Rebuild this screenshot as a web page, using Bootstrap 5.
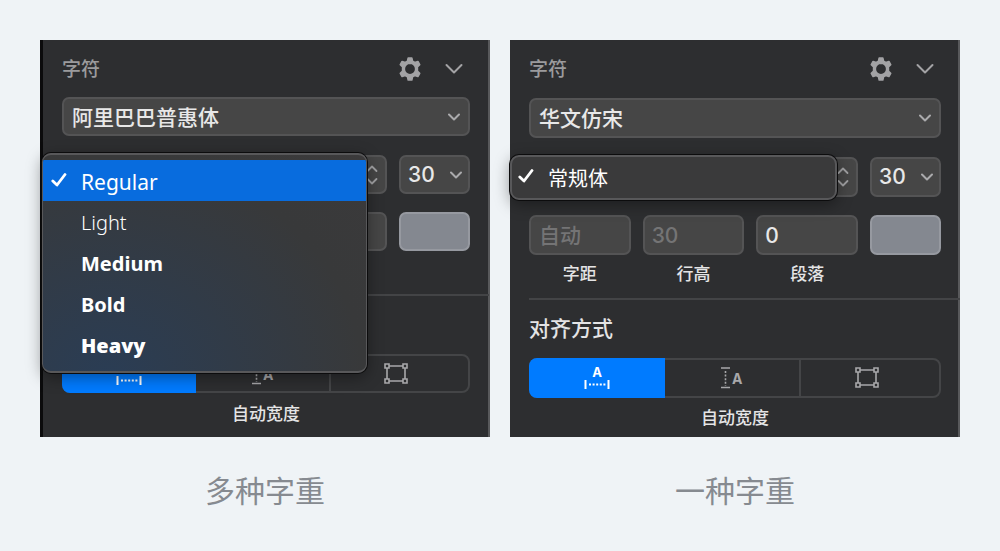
<!DOCTYPE html>
<html lang="zh-CN">
<head>
<meta charset="utf-8">
<meta name="viewport" content="width=device-width, initial-scale=1">
<title>字重对比</title>
<link href="https://cdn.jsdelivr.net/npm/bootstrap@5.3.0/dist/css/bootstrap.min.css" rel="stylesheet">
<style>
  body { background: #eff3f6; font-family: "Noto Sans CJK SC", sans-serif; }
  .compare { padding: 40px; gap: 20px; }
  .sample { flex: 1 1 0; min-width: 0; }
  .sample figcaption { margin-top: 34px; font-size: 30px; line-height: 36px; font-weight: 400; color: #868a90; }

  .inspector { --ctl: 40px; --pad-start: 19px; --pad-end: 17px; background: #2d2e30; color: #e4e4e5;
    border-right: 2px solid #58595b; padding: 0 var(--pad-end) 0 var(--pad-start); }
  .inspector.edge { --ctl: 39px; --pad-end: 18px; border-left: 3px solid #0b0b0c; }
  .inspector-head { height: 58px; }
  .edge .inspector-head { height: 57px; }
  .inspector-head h2 { font-size: 19px; line-height: 24px; font-weight: 500; color: #9b9b9d; padding-bottom: 2px; }
  .tool { border: 0; background: none; padding: 0; line-height: 0; color: #a3a3a5; }
  .tool-arrow { width: 32px; }

  .field { height: var(--ctl); width: 100%; border: 2px solid #545455; border-radius: 7px; background-color: #464646;
    color: #e8e8e8; font-size: 21px; line-height: 24px; padding: 0 8px 2px; font-weight: 500; }
  .field:focus { box-shadow: none; background-color: #464646; color: #e8e8e8; border-color: #6a6a6b; }
  .field.form-select { background-image: url("data:image/svg+xml,%3Csvg xmlns='http://www.w3.org/2000/svg' viewBox='0 0 12 8'%3E%3Cpath d='M1 1.5l5 5 5-5' fill='none' stroke='%23aaaaac' stroke-width='2' stroke-linecap='round' stroke-linejoin='round'/%3E%3C/svg%3E");
    background-size: 12px 8px; background-position: right 8px center; background-repeat: no-repeat; padding-right: 24px; }
  .field.num { font-family: Inter, sans-serif; font-size: 21px; padding-left: 7px; padding-bottom: 0; }
  .field.dim { color: #747475; }
  .field::placeholder { color: #747475; opacity: 1; }
  .field.form-select.num { background-position: right 6px center; }
  .swatch { background: #848890; border-color: #9699a0; }

  .grid-fields { display: grid; grid-template-columns: repeat(3, minmax(0, 1fr)) 71px; column-gap: 12px; }
  .grid-style { margin-top: 19px; }
  .grid-metrics { margin-top: 18px; }
  .span-three { grid-column: span 3; }
  .style-trigger { color: #a0a0a2; padding: 0 7px; }
  .caption-line { font-size: 17px; line-height: 24px; font-weight: 500; }
  .grid-metrics label, .grid-metrics .blank-label { height: 24px; margin-top: 6px; text-align: center; }

  .popup.dropdown-menu { top: -2px; left: calc(0px - var(--pad-start)); right: 21px; min-width: 0; margin: 0; padding: 0; z-index: 2;
    background: #3a3a3b; border: 2px solid #58585a; border-radius: 9px; overflow: hidden;
    box-shadow: 0 0 0 1px #0c0c0d, 0 4px 16px rgba(0,0,0,.4); }
  .popup.tall { left: -20px; right: 20px; padding: 5px 0 6px; border-width: 2px 1px 2px;
    background: radial-gradient(ellipse at 20% 105%, #2a3d55 0%, #38393a 70%, #3b3a3b 100%); }
  .popup .dropdown-item { height: 41px; padding: 2px 8px 0; display: flex; align-items: center; color: #fff; font-size: 21px; line-height: 28px;
    font-family: "Noto Sans", "Noto Sans CJK SC", sans-serif; }
  .popup .dropdown-item:hover { background: #4a4a4c; }
  .popup .dropdown-item.chosen { background: #086cde; }
  .popup .tick { width: 30px; line-height: 0; padding-bottom: 4px; }
  .popup .dropdown-item.face-cn { padding: 0 6px; font-size: 20px; font-family: "Noto Sans CJK SC", sans-serif; }
  .popup .dropdown-item.w-light { font-weight: 300; font-size: 20px; }
  .popup .dropdown-item.w-medium, .popup .dropdown-item.w-bold { font-weight: 700; font-size: 20px; }
  .popup .dropdown-item.w-heavy { font-weight: 900; font-size: 20px; }

  .rule { height: 2px; margin: 13px -19px 0 0; background: #434446; }
  .section-title { height: 58px; padding-bottom: 4px; }
  .section-title h3 { font-size: 21px; line-height: 28px; font-weight: 500; color: #e4e4e5; }
  .segments { display: grid; grid-template-columns: 100fr 100fr 105fr; height: var(--ctl); border: 2px solid #444547; border-radius: 8px; }
  .segments label { display: flex; align-items: center; justify-content: center; color: #a8a8aa; margin: -2px 0; cursor: pointer; }
  .segments label + input + label { border-left: 2px solid #444547; }
  .segments label:last-child { padding-right: 6px; }
  .segments .btn-check:checked + label { background: #007bff; color: #fff; margin-left: -2px; border-radius: 8px 0 0 8px; }
  .segments .btn-check:checked + label + input + label { border-left: 0; }
  .segments text { font-family: Inter, sans-serif; font-weight: 700; fill: currentColor; }
  .mode-name { height: 39px; padding-bottom: 1px; }
  .edge .mode-name { height: 40px; }
</style>
</head>
<body>
<svg class="d-none">
  <symbol id="gear" viewBox="0 0 24 24">
    <path fill="currentColor" fill-rule="evenodd" stroke="currentColor" stroke-width="1.6" stroke-linejoin="round" d="M10.200 1h3.600l.7 3.200 2.300 1.300 3.100-1 1.800 3.100-2.300 2.200v4.400l2.300 2.200-1.800 3.100-3.100-1-2.300 1.300-.7 3.200h-3.600l-.7-3.200-2.300-1.300-3.100 1-1.800-3.100 2.300-2.200V9.800L2.300 7.600l1.800-3.100 3.100 1 2.300-1.300zM12 6.300a5.700 5.700 0 1 0 0 11.400 5.700 5.700 0 0 0 0-11.400z"/>
  </symbol>
  <symbol id="chevron" viewBox="0 0 18 12"><path d="M1.500 2L9 9.500 16.500 2" fill="none" stroke="currentColor" stroke-width="2" stroke-linecap="round" stroke-linejoin="round"/></symbol>
  <symbol id="stepper" viewBox="0 0 12 20"><path d="M1.500 6L6 1.500 10.500 6M1.500 14L6 18.500 10.500 14" fill="none" stroke="currentColor" stroke-width="1.800" stroke-linecap="round" stroke-linejoin="round"/></symbol>
  <symbol id="tick" viewBox="0 0 16 16"><path d="M1.800 9L6 13 14 2.500" fill="none" stroke="currentColor" stroke-width="2.800" stroke-linecap="round" stroke-linejoin="round"/></symbol>
  <symbol id="frame" viewBox="0 0 24 22"><path d="M5 3h14M5 18h14M3 5v11M21 5v11M1 1h4v4H1zM19 1h4v4h-4zM1 16h4v4H1zM19 16h4v4h-4z" fill="none" stroke="currentColor" stroke-width="1.600"/></symbol>
</svg>

<main class="compare d-flex flex-column flex-md-row">
  <figure class="sample m-0">
    <section class="inspector edge pb-1">
      <header class="inspector-head d-flex align-items-center">
        <h2 class="m-0 me-auto">字符</h2>
        <button class="tool me-3" type="button" aria-label="设置"><svg width="24" height="24"><use href="#gear"/></svg></button>
        <button class="tool tool-arrow" type="button" aria-label="折叠"><svg width="18" height="12"><use href="#chevron"/></svg></button>
      </header>
      <select class="form-select field" aria-label="字体"><option>阿里巴巴普惠体</option></select>
      <div class="grid-fields grid-style">
        <div class="span-three position-relative">
          <button class="field style-trigger d-flex align-items-center justify-content-end" type="button" aria-label="字重"><svg width="12" height="20"><use href="#stepper"/></svg></button>
          <div class="dropdown-menu show popup tall">
            <button class="dropdown-item chosen" type="button"><span class="tick"><svg width="16" height="16"><use href="#tick"/></svg></span>Regular</button>
            <button class="dropdown-item w-light" type="button"><span class="tick"></span>Light</button>
            <button class="dropdown-item w-medium" type="button"><span class="tick"></span>Medium</button>
            <button class="dropdown-item w-bold" type="button"><span class="tick"></span>Bold</button>
            <button class="dropdown-item w-heavy" type="button"><span class="tick"></span>Heavy</button>
          </div>
        </div>
        <select class="form-select field num" aria-label="字号"><option>30</option></select>
      </div>
      <div class="grid-fields grid-metrics">
        <input class="field" type="text" aria-label="字距">
        <input class="field" type="text" aria-label="行高">
        <input class="field" type="text" aria-label="段落">
        <button class="field swatch" type="button" aria-label="颜色"></button>
        <span class="blank-label"></span>
      </div>
      <div class="rule"></div>
      <div class="section-title"></div>
      <div class="segments" role="radiogroup" aria-label="对齐方式">
        <input class="btn-check" type="radio" name="modeA" id="a1" checked><label for="a1" aria-label="自动宽度"><svg width="26" height="28" viewBox="0 0 26 28"><path d="M1.500 16v9M24.500 16v9" stroke="currentColor" stroke-width="2"/><path d="M5 20.500h17" stroke="currentColor" stroke-width="2" stroke-dasharray="2 1.600"/></svg></label>
        <input class="btn-check" type="radio" name="modeA" id="a2"><label for="a2" aria-label="自动高度"><svg width="24" height="24" viewBox="0 0 24 24"><path d="M1 2h9M1 21.500h9" stroke="currentColor" stroke-width="1.600"/><path d="M5.500 5v15" stroke="currentColor" stroke-width="1.600" stroke-dasharray="2 1.600"/><text x="12" y="18" font-size="14">A</text></svg></label>
        <input class="btn-check" type="radio" name="modeA" id="a3"><label for="a3" aria-label="固定尺寸"><svg width="24" height="22"><use href="#frame"/></svg></label>
      </div>
      <div class="mode-name caption-line d-flex align-items-center justify-content-center">自动宽度</div>
    </section>
    <figcaption class="text-center">多种字重</figcaption>
  </figure>

  <figure class="sample m-0">
    <section class="inspector">
      <header class="inspector-head d-flex align-items-center">
        <h2 class="m-0 me-auto">字符</h2>
        <button class="tool me-3" type="button" aria-label="设置"><svg width="24" height="24"><use href="#gear"/></svg></button>
        <button class="tool tool-arrow" type="button" aria-label="折叠"><svg width="18" height="12"><use href="#chevron"/></svg></button>
      </header>
      <select class="form-select field" aria-label="字体"><option>华文仿宋</option></select>
      <div class="grid-fields grid-style">
        <div class="span-three position-relative">
          <button class="field style-trigger d-flex align-items-center justify-content-end" type="button" aria-label="字重"><svg width="12" height="20"><use href="#stepper"/></svg></button>
          <div class="dropdown-menu show popup">
            <button class="dropdown-item face-cn" type="button"><span class="tick"><svg width="16" height="16"><use href="#tick"/></svg></span>常规体</button>
          </div>
        </div>
        <select class="form-select field num" aria-label="字号"><option>30</option></select>
      </div>
      <div class="grid-fields grid-metrics">
        <input class="field" type="text" id="spacing" placeholder="自动">
        <input class="field num dim" type="text" id="leading" placeholder="30">
        <input class="field num" type="text" id="para" value="0">
        <button class="field swatch" type="button" aria-label="颜色"></button>
        <label class="caption-line" for="spacing">字距</label>
        <label class="caption-line" for="leading">行高</label>
        <label class="caption-line" for="para">段落</label>
      </div>
      <div class="rule"></div>
      <div class="section-title d-flex align-items-center"><h3 class="m-0">对齐方式</h3></div>
      <div class="segments" role="radiogroup" aria-label="对齐方式">
        <input class="btn-check" type="radio" name="modeB" id="b1" checked><label for="b1" aria-label="自动宽度"><svg width="26" height="28" viewBox="0 0 26 28"><text x="13" y="13" font-size="13" text-anchor="middle">A</text><path d="M1.500 16v9M24.500 16v9" stroke="currentColor" stroke-width="2"/><path d="M5 20.500h17" stroke="currentColor" stroke-width="2" stroke-dasharray="2 1.600"/></svg></label>
        <input class="btn-check" type="radio" name="modeB" id="b2"><label for="b2" aria-label="自动高度"><svg width="24" height="24" viewBox="0 0 24 24"><path d="M1 2h9M1 21.500h9" stroke="currentColor" stroke-width="1.600"/><path d="M5.500 5v15" stroke="currentColor" stroke-width="1.600" stroke-dasharray="2 1.600"/><text x="12" y="18" font-size="14">A</text></svg></label>
        <input class="btn-check" type="radio" name="modeB" id="b3"><label for="b3" aria-label="固定尺寸"><svg width="24" height="22"><use href="#frame"/></svg></label>
      </div>
      <div class="mode-name caption-line d-flex align-items-center justify-content-center">自动宽度</div>
    </section>
    <figcaption class="text-center">一种字重</figcaption>
  </figure>
</main>
<script src="https://cdn.jsdelivr.net/npm/bootstrap@5.3.0/dist/js/bootstrap.bundle.min.js"></script>
</body>
</html>
